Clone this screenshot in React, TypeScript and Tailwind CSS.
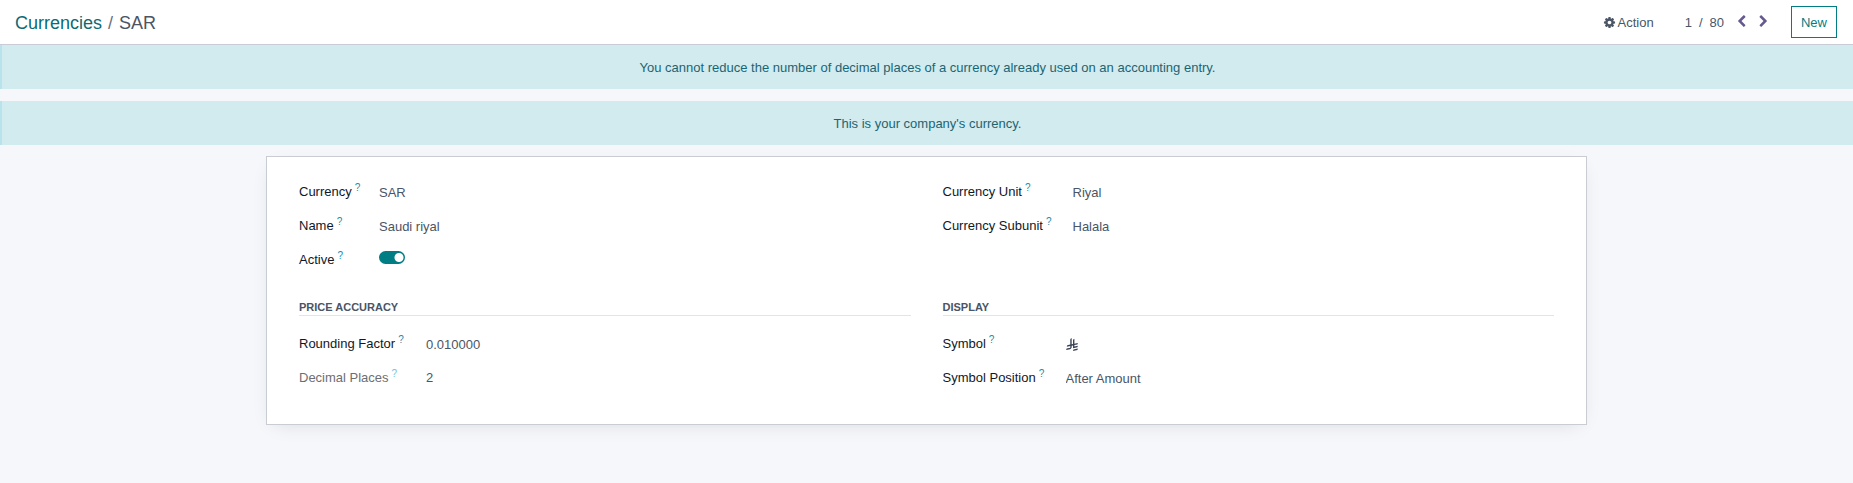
import type { ReactNode } from "react";

function Help({ faded = false }: { faded?: boolean }) {
  return (
    <sup className={faded ? "top-[-5px] ml-[3px] text-[10px] leading-none text-[#7fc0d3]" : "top-[-5px] ml-[3px] text-[10px] leading-none text-[#1a8cad]"}>?</sup>
  );
}

type FieldProps = { id: string; label: string; muted?: boolean; children: ReactNode };

function Field({ id, label, muted = false, children }: FieldProps) {
  return (
    <>
      <label htmlFor={id} className={muted ? "h-5 whitespace-nowrap text-[#6c6e73]" : "h-5 whitespace-nowrap text-gray-900"}>
        {label}
        <Help faded={muted} />
      </label>
      <div className={muted ? "flex h-5 min-w-0 items-center" : "flex h-5 min-w-0 items-center pt-px"}>{children}</div>
    </>
  );
}

function TextValue({ id, value }: { id: string; value: string }) {
  return <input id={id} type="text" defaultValue={value} className="w-full bg-transparent p-0 leading-5 text-gray-600 outline-none" />;
}

function Alert({ children }: { children: ReactNode }) {
  return (
    <div role="alert" className="border-l-2 border-[#b8e2ec] bg-[#d1ebef] px-4 pt-[13px] pb-[11px] text-center text-[#1b6572]">
      {children}
    </div>
  );
}

function SectionTitle({ children }: { children: ReactNode }) {
  return (
    <h2 className="mb-[18px] border-b border-[#e3e4e7] pt-px text-[11px] leading-4 font-bold text-gray-600 uppercase">{children}</h2>
  );
}

function GearIcon() {
  return (
    <svg viewBox="0 0 1792 1792" className="size-[13px] fill-current" aria-hidden="true">
      <path d="M1152 896q0-106-75-181t-181-75-181 75-75 181 75 181 181 75 181-75 75-181zm512-109v222q0 12-8 23t-20 13l-185 28q-19 54-39 91 35 50 107 138 10 12 10 25t-9 23q-27 37-99 108t-94 71q-12 0-26-9l-138-108q-44 23-91 38-16 136-29 186-7 28-36 28h-222q-14 0-24.500-8.500t-11.500-21.500l-28-184q-49-16-90-37l-141 107q-10 9-25 9-14 0-25-11-126-114-165-168-7-10-7-23 0-12 8-23 15-21 51-66.500t54-70.500q-27-50-41-99l-183-27q-13-2-21-12.500t-8-23.500v-222q0-12 8-23t19-13l186-28q14-46 39-92-40-57-107-138-10-12-10-24 0-10 9-23 26-36 98.500-107.500t94.500-71.500q13 0 26 10l138 107q44-23 91-38 16-136 29-186 7-28 36-28h222q14 0 24.500 8.500t11.500 21.500l28 184q49 16 90 37l142-107q9-9 24-9 13 0 25 10 129 119 165 170 7 8 7 22 0 12-8 23-15 21-51 66.500t-54 70.500q26 50 41 98l183 28q13 2 21 12.500t8 23.500z" />
    </svg>
  );
}

function ChevronLeft() {
  return (
    <svg viewBox="0 0 1792 1792" className="size-[13px] fill-current" aria-hidden="true">
      <path d="M1427 301l-531 531 531 531q19 19 19 45t-19 45l-166 166q-19 19-45 19t-45-19l-742-742q-19-19-19-45t19-45l742-742q19-19 45-19t45 19l166 166q19 19 19 45t-19 45z" />
    </svg>
  );
}

function ChevronRight() {
  return (
    <svg viewBox="0 0 1792 1792" className="size-[13px] fill-current" aria-hidden="true">
      <path d="M1363 877l-742 742q-19 19-45 19t-45-19l-166-166q-19-19-19-45t19-45l531-531-531-531q-19-19-19-45t19-45l166-166q19-19 45-19t45 19l742 742q19 19 19 45t-19 45z" />
    </svg>
  );
}

function RiyalSign() {
  return (
    <svg viewBox="0 0 1124.14 1256.39" className="mb-px h-[13px] w-[12px] fill-gray-700" role="img" aria-label="Riyal">
      <path d="M699.62,1113.02h0c-20.06,44.48-33.32,92.75-38.4,143.37l424.51-90.24c20.06-44.47,33.31-92.75,38.4-143.37l-424.51,90.24Z" />
      <path d="M1085.73,895.8c20.06-44.47,33.32-92.75,38.4-143.37l-330.68,70.33v-135.2l292.27-62.11c20.06-44.47,33.32-92.75,38.4-143.37l-330.68,70.27V66.13c-50.67,28.45-95.67,66.32-132.25,110.99v403.35l-132.25,28.11V0c-50.67,28.44-95.67,66.32-132.25,110.99v525.69l-295.91,62.88c-20.06,44.47-33.33,92.75-38.42,143.37l334.33-71.05v170.26l-358.3,76.14c-20.06,44.47-33.32,92.75-38.4,143.37l375.04-79.7c30.53-6.35,56.77-24.4,73.83-49.24l68.78-101.97v-.02c7.14-10.55,11.3-23.27,11.3-36.97v-149.98l132.25-28.11v270.4l424.53-90.28Z" />
    </svg>
  );
}

export default function App() {
  return (
    <div className="min-h-screen bg-[#f5f7fb] font-['Liberation_Sans',Arial,sans-serif] text-[13px] leading-5 text-gray-600">
      <header className="flex h-[45px] items-center justify-between border-b border-[#c9ccd6] bg-white pr-4 pl-[15px]">
        <nav aria-label="Breadcrumb" className="pt-[2px]">
          <ol className="flex gap-[6px] text-lg leading-6">
            <li>
              <a href="#currencies" className="text-[#0d6a74]">Currencies</a>
            </li>
            <li aria-hidden="true" className="text-gray-500">/</li>
            <li aria-current="page">SAR</li>
          </ol>
        </nav>
        <div className="flex items-center">
          <button type="button" className="flex items-center gap-[2px] pt-px">
            <GearIcon />
            Action
          </button>
          <span className="ml-[31px] flex gap-[7px] pt-px">
            <span>1</span>
            <span>/</span>
            <span>80</span>
          </span>
          <div className="mb-[2px] ml-[11px] flex gap-[9px] text-[#66598f]">
            <button type="button" aria-label="Previous">
              <ChevronLeft />
            </button>
            <button type="button" aria-label="Next">
              <ChevronRight />
            </button>
          </div>
          <button type="button" className="ml-[21px] border border-[#017e84] px-[9px] pt-[6px] pb-[4px] text-[#017e84]">
            New
          </button>
        </div>
      </header>

      <main>
        <div className="flex flex-col gap-3">
          <Alert>You cannot reduce the number of decimal places of a currency already used on an accounting entry.</Alert>
          <Alert>This is your company's currency.</Alert>
        </div>

        <form className="mx-auto mt-[11px] max-w-[1321px] border border-[#c9ccd2] bg-white px-8 pt-[25px] pb-9 shadow-[0_5px_20px_-8px_rgba(0,0,0,0.14)]">
          <div className="grid grid-cols-2 gap-x-8 gap-y-7">
            <div className="grid grid-cols-[80px_1fr] content-start gap-y-[14px]">
              <Field id="code" label="Currency">
                <TextValue id="code" value="SAR" />
              </Field>
              <Field id="name" label="Name">
                <TextValue id="name" value="Saudi riyal" />
              </Field>
              <Field id="active" label="Active">
                <input
                  id="active"
                  type="checkbox"
                  role="switch"
                  defaultChecked
                  className="h-[13px] w-[26px] appearance-none self-start rounded-full bg-gray-300 bg-[radial-gradient(circle_at_6px_50%,white_4px,transparent_5px)] checked:bg-[#017e84] checked:bg-[radial-gradient(circle_at_20px_50%,white_4px,transparent_5px)]"
                />
              </Field>
            </div>
            <div className="grid grid-cols-[130px_1fr] content-start gap-y-[14px]">
              <Field id="unit" label="Currency Unit">
                <TextValue id="unit" value="Riyal" />
              </Field>
              <Field id="subunit" label="Currency Subunit">
                <TextValue id="subunit" value="Halala" />
              </Field>
            </div>
            <section>
              <SectionTitle>Price Accuracy</SectionTitle>
              <div className="grid grid-cols-[127px_1fr] gap-y-[14px]">
                <Field id="rounding" label="Rounding Factor">
                  <TextValue id="rounding" value="0.010000" />
                </Field>
                <Field id="decimals" label="Decimal Places" muted>
                  <output id="decimals">2</output>
                </Field>
              </div>
            </section>
            <section>
              <SectionTitle>Display</SectionTitle>
              <div className="grid grid-cols-[123px_1fr] gap-y-[14px]">
                <Field id="symbol" label="Symbol">
                  <output id="symbol">
                    <RiyalSign />
                  </output>
                </Field>
                <Field id="position" label="Symbol Position">
                  <select id="position" defaultValue="after" className="w-full appearance-none bg-transparent p-0 leading-5 outline-none">
                    <option value="after">After Amount</option>
                    <option value="before">Before Amount</option>
                  </select>
                </Field>
              </div>
            </section>
          </div>
        </form>
      </main>
    </div>
  );
}
